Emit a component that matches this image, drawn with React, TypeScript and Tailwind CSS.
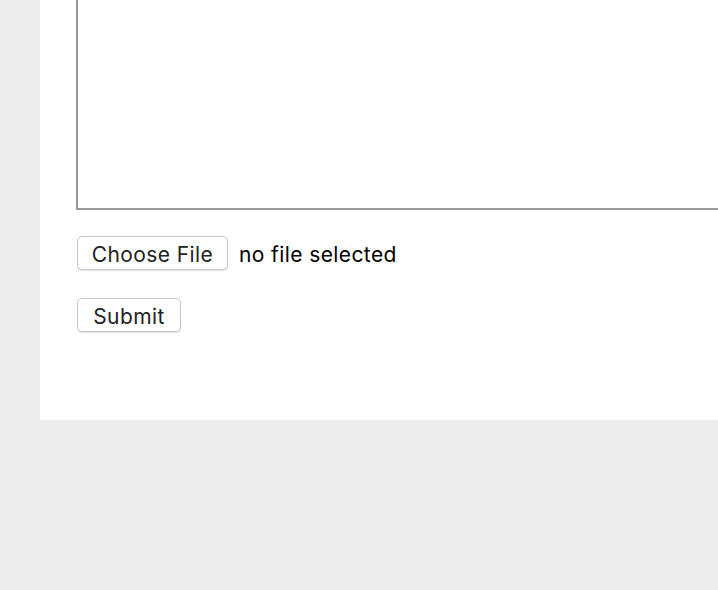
import React from 'react';

const App: React.FC = () => {
  return (
    <div className="min-h-[590px] w-full bg-[#ededed] overflow-hidden" style={{ fontFamily: 'Inter, "Liberation Sans", sans-serif' }}>
      <div className="ml-[40px] h-[420px] bg-white overflow-hidden">
        <form className="pl-[36px] flex flex-col" onSubmit={(e) => e.preventDefault()}>
          <textarea
            className="block w-[720px] h-[210px] border-2 border-t-0 border-[#999999] bg-white resize-none outline-none"
            defaultValue=""
          />
          <div className="mt-[26px] ml-[1px] flex items-center gap-[11px]">
            <button
              type="button"
              className="h-[34px] w-[151px] pt-[2px] bg-white border border-[#c8c8c8] rounded-[5px] shadow-[0_1px_1px_rgba(0,0,0,0.12)] text-[21px] text-[#222] tracking-[0.4px] leading-none"
            >
              Choose File
            </button>
            <span className="pt-[2px] text-[21px] text-black tracking-[0.4px] leading-none">no file selected</span>
          </div>
          <div className="mt-[28px] ml-[1px]">
            <button
              type="submit"
              className="h-[34px] w-[104px] pt-[2px] bg-white border border-[#c8c8c8] rounded-[5px] shadow-[0_1px_1px_rgba(0,0,0,0.12)] text-[21px] text-[#222] tracking-[0.4px] leading-none"
            >
              Submit
            </button>
          </div>
        </form>
      </div>
    </div>
  );
};

export default App;
